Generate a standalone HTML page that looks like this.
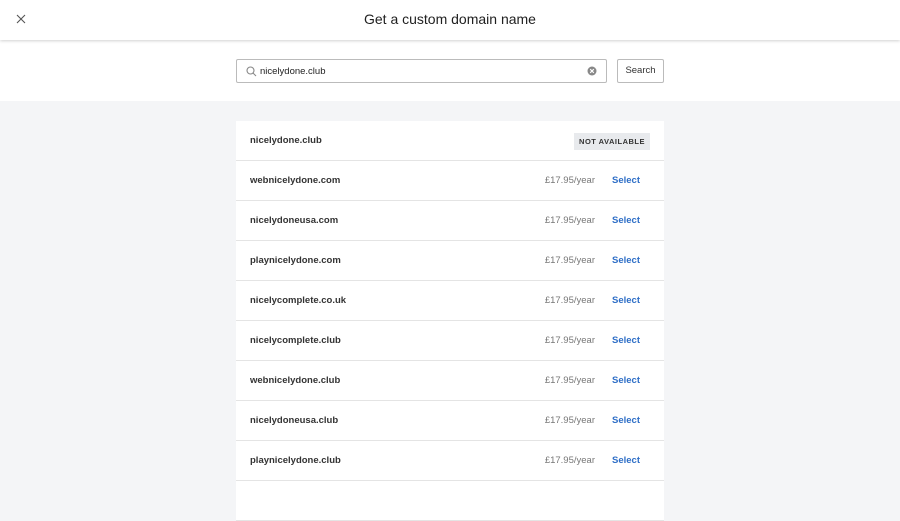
<!DOCTYPE html>
<html><head><style>
*{box-sizing:border-box;margin:0;padding:0}
body{width:900px;height:484px;overflow:hidden;background:#f4f5f7;font-family:"Liberation Sans",sans-serif;color:#222;position:relative}
.hdr{position:absolute;left:0;top:0;width:900px;height:40px;background:#fff;box-shadow:0 1px 3px rgba(0,0,0,.18);z-index:2}
.hdr h1{font-size:14px;font-weight:normal;text-align:center;line-height:38px;color:#1f1f1f}
.x{position:absolute;left:16px;top:14px}
.top{position:absolute;left:0;top:40px;width:900px;height:61px;background:#fff}
.inp{position:absolute;left:236px;top:19px;width:371px;height:24px;border:1px solid #bbb;border-radius:2px}
.inp span{position:absolute;left:23px;top:6px;font-size:9.5px;color:#222}
.btn{position:absolute;left:617px;top:19px;width:47px;height:24px;border:1px solid #bbb;border-radius:2px;font-size:9.5px;text-align:center;line-height:22px;color:#333}
.card{position:absolute;left:236px;top:121px;width:428px;background:#fff}
.row{height:40px;border-bottom:1px solid #e4e4e4;position:relative;font-size:9.5px}
.row .n{position:absolute;left:14px;top:14px;font-weight:bold;color:#333}
.row .p{position:absolute;right:69px;top:14px;color:#777}
.row .s{position:absolute;right:24px;top:14px;color:#2f6fc7;font-weight:bold}
.na{position:absolute;right:14px;top:12px;background:#e8eaed;font-size:7.5px;font-weight:bold;letter-spacing:.5px;padding:4px 5px;color:#333}
</style></head><body>
<div class="hdr"><svg class="x" width="10" height="10" viewBox="0 0 10 10"><path d="M1 1L9 9M9 1L1 9" stroke="#555" stroke-width="1.1"/></svg><h1>Get a custom domain name</h1></div>
<div class="top">
<div class="inp"><svg style="position:absolute;left:9px;top:6px" width="11" height="11" viewBox="0 0 11 11"><circle cx="4.5" cy="4.5" r="3.5" fill="none" stroke="#888" stroke-width="1.1"/><path d="M7 7L10 10" stroke="#888" stroke-width="1.1"/></svg><span>nicelydone.club</span><svg style="position:absolute;right:9px;top:6px" width="10" height="10" viewBox="0 0 10 10"><circle cx="5" cy="5" r="4.5" fill="#888"/><path d="M3.2 3.2L6.8 6.8M6.8 3.2L3.2 6.8" stroke="#fff" stroke-width="1.1"/></svg></div>
<div class="btn">Search</div>
</div>
<div class="card">
<div class="row"><span class="n">nicelydone.club</span><span class="na">NOT AVAILABLE</span></div>
<div class="row"><span class="n">webnicelydone.com</span><span class="p">£17.95/year</span><span class="s">Select</span></div>
<div class="row"><span class="n">nicelydoneusa.com</span><span class="p">£17.95/year</span><span class="s">Select</span></div>
<div class="row"><span class="n">playnicelydone.com</span><span class="p">£17.95/year</span><span class="s">Select</span></div>
<div class="row"><span class="n">nicelycomplete.co.uk</span><span class="p">£17.95/year</span><span class="s">Select</span></div>
<div class="row"><span class="n">nicelycomplete.club</span><span class="p">£17.95/year</span><span class="s">Select</span></div>
<div class="row"><span class="n">webnicelydone.club</span><span class="p">£17.95/year</span><span class="s">Select</span></div>
<div class="row"><span class="n">nicelydoneusa.club</span><span class="p">£17.95/year</span><span class="s">Select</span></div>
<div class="row"><span class="n">playnicelydone.club</span><span class="p">£17.95/year</span><span class="s">Select</span></div>
<div class="row"></div>
</div>
</body></html>
